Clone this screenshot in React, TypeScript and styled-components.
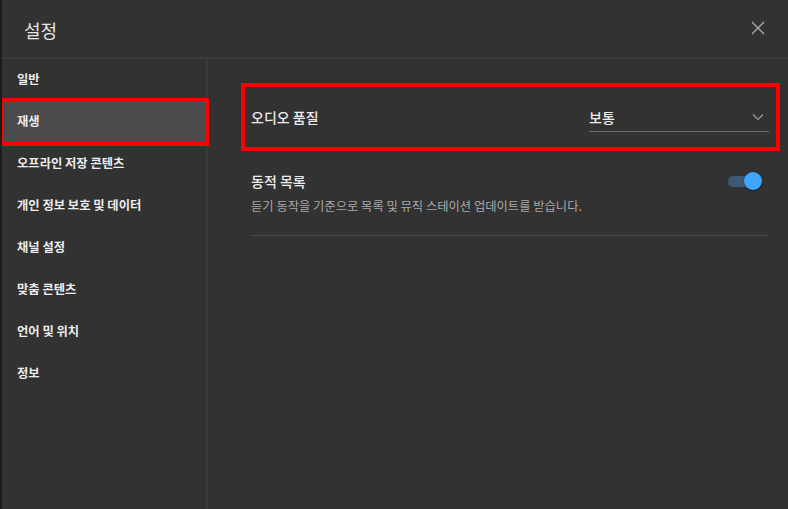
import styled, { createGlobalStyle } from 'styled-components';

const GlobalStyle = createGlobalStyle`
  html, body {
    margin: 0;
    padding: 0;
    background: #323232;
  }
  * {
    box-sizing: border-box;
  }
`;

const Dialog = styled.div`
  width: 788px;
  height: 509px;
  display: flex;
  flex-direction: column;
  background: #323232;
  border-left: 2px solid #1b1b1b;
  font-family: 'Noto Sans CJK KR', 'Noto Sans', sans-serif;
  color: #ececec;
  overflow: hidden;
`;

const Header = styled.div`
  height: 59px;
  flex: none;
  display: flex;
  align-items: center;
  justify-content: space-between;
  padding: 0 20px 0 22px;
  border-bottom: 2px solid #3b3b3b;
`;

const Title = styled.h1`
  margin: 2px 0 0;
  font-size: 18px;
  font-weight: 400;
  color: #e6e6e6;
`;

const CloseButton = styled.button`
  width: 20px;
  height: 20px;
  padding: 0;
  margin-bottom: 2px;
  border: none;
  background: none;
  display: flex;
  align-items: center;
  justify-content: center;
  cursor: pointer;
`;

const Body = styled.div`
  flex: 1;
  display: flex;
`;

const Sidebar = styled.nav`
  width: 206px;
  flex: none;
  border-right: 2px solid #3b3b3b;
  display: flex;
  flex-direction: column;
`;

const NavItem = styled.div<{ $active?: boolean }>`
  height: 42px;
  display: flex;
  align-items: center;
  padding: 0 0 2px 15px;
  font-size: 12.3px;
  font-weight: 700;
  color: #ededed;
  background: ${(p) => (p.$active ? '#4b4b4b' : 'transparent')};
  outline: ${(p) => (p.$active ? '4px solid #ff0000' : 'none')};
  outline-offset: -1px;
  position: relative;
`;

const Content = styled.main`
  flex: 1;
  padding: 0 19px 0 43px;
  display: flex;
  flex-direction: column;
`;

const QualityRow = styled.div`
  margin: 24px -11px 0 -10px;
  height: 68px;
  border: 4px solid #ff0000;
  padding: 0 7px 0 6px;
  display: flex;
  align-items: center;
  justify-content: space-between;
`;

const Label = styled.div`
  font-size: 14px;
  font-weight: 500;
  color: #ececec;
`;

const Select = styled.div`
  width: 180px;
  height: 28px;
  margin-top: 2px;
  display: flex;
  align-items: center;
  justify-content: space-between;
  border-bottom: 1px solid #6a6a6a;
  font-size: 14px;
  font-weight: 500;
  color: #ececec;
  padding: 0 5px 2px 0;
`;

const ToggleRow = styled.div`
  padding: 21px 0 21px;
  border-bottom: 1px solid #4a4a4a;
  display: flex;
  align-items: flex-start;
  justify-content: space-between;
`;

const TextBlock = styled.div`
  display: flex;
  flex-direction: column;
  gap: 8px;
`;

const ToggleTitle = styled.div`
  font-size: 14px;
  font-weight: 500;
  line-height: 18px;
  color: #ececec;
`;

const Description = styled.div`
  font-size: 12.3px;
  line-height: 16px;
  color: #a8a8a8;
`;

const Toggle = styled.div`
  width: 34px;
  height: 20px;
  margin: -1px 7px 0 0;
  position: relative;
  display: flex;
  align-items: center;
`;

const Track = styled.div`
  width: 28px;
  height: 11px;
  border-radius: 6px;
  background: #3c5a75;
`;

const Knob = styled.div`
  position: absolute;
  right: 0;
  top: 1px;
  width: 18px;
  height: 18px;
  border-radius: 50%;
  background: #3ea6ff;
  box-shadow: 0 1px 2px rgba(0, 0, 0, 0.4);
`;

const menu = [
  '일반',
  '재생',
  '오프라인 저장 콘텐츠',
  '개인 정보 보호 및 데이터',
  '채널 설정',
  '맞춤 콘텐츠',
  '언어 및 위치',
  '정보',
];

export default function App() {
  return (
    <>
      <GlobalStyle />
      <Dialog>
        <Header>
          <Title>설정</Title>
          <CloseButton aria-label="닫기">
            <svg width="16" height="16" viewBox="0 0 16 16">
              <path d="M2 2 L14 14 M14 2 L2 14" stroke="#a9a9a9" strokeWidth="1.4" />
            </svg>
          </CloseButton>
        </Header>
        <Body>
          <Sidebar>
            {menu.map((m) => (
              <NavItem key={m} $active={m === '재생'}>
                {m}
              </NavItem>
            ))}
          </Sidebar>
          <Content>
            <QualityRow>
              <Label>오디오 품질</Label>
              <Select>
                <span>보통</span>
                <svg width="12" height="8" viewBox="0 0 12 8">
                  <path d="M1 1.5 L6 6.5 L11 1.5" fill="none" stroke="#9a9a9a" strokeWidth="1.2" />
                </svg>
              </Select>
            </QualityRow>
            <ToggleRow>
              <TextBlock>
                <ToggleTitle>동적 목록</ToggleTitle>
                <Description>듣기 동작을 기준으로 목록 및 뮤직 스테이션 업데이트를 받습니다.</Description>
              </TextBlock>
              <Toggle>
                <Track />
                <Knob />
              </Toggle>
            </ToggleRow>
          </Content>
        </Body>
      </Dialog>
    </>
  );
}
